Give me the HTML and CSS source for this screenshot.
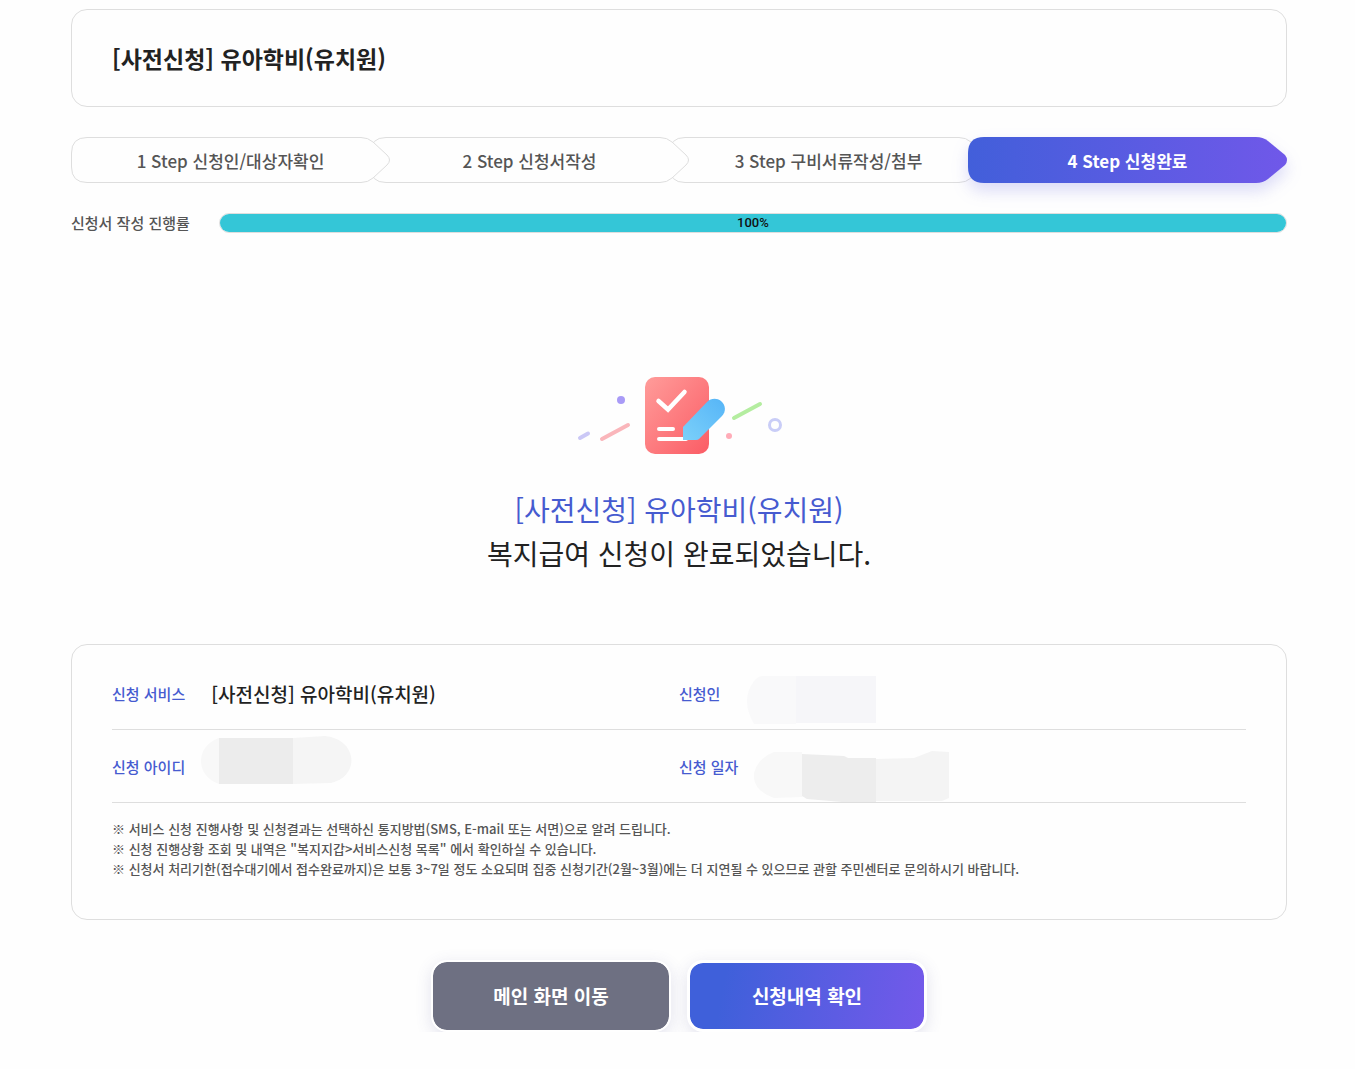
FILE: index.html
```html
<!DOCTYPE html>
<html lang="ko">
<head>
<meta charset="UTF-8">
<meta name="viewport" content="width=device-width, initial-scale=1.0">
<title>[사전신청] 유아학비(유치원)</title>
<link rel="stylesheet" href="styles.css">
</head>
<body>
    <main class="container">
        <header class="title-box">
            <h1>[사전신청] 유아학비(유치원)</h1>
        </header>

        <ol class="steps">
            <li class="step step1">
                <svg viewBox="0 0 319 46" preserveAspectRatio="none" aria-hidden="true"><path d="M16 .5H290Q297 .5 302 5L316 18Q321 23 316 28L302 41Q297 45.500 290 45.500H16Q.5 45.500 .5 30V16Q.5 .5 16 .5Z"/></svg>
                <span>1 Step 신청인/대상자확인</span>
            </li>
            <li class="step step2">
                <svg viewBox="0 0 319 46" preserveAspectRatio="none" aria-hidden="true"><path d="M16 .5H290Q297 .5 302 5L316 18Q321 23 316 28L302 41Q297 45.500 290 45.500H16Q.5 45.500 .5 30V16Q.5 .5 16 .5Z"/></svg>
                <span>2 Step 신청서작성</span>
            </li>
            <li class="step step3">
                <svg viewBox="0 0 319 46" preserveAspectRatio="none" aria-hidden="true"><path d="M16 .5H290Q297 .5 302 5L316 18Q321 23 316 28L302 41Q297 45.500 290 45.500H16Q.5 45.500 .5 30V16Q.5 .5 16 .5Z"/></svg>
                <span>3 Step 구비서류작성/첨부</span>
            </li>
            <li class="step active" aria-current="step">
                <svg viewBox="0 0 319 46" preserveAspectRatio="none" aria-hidden="true">
                    <defs>
                        <linearGradient id="stepFill" x1="0" y1="0" x2="1" y2="0">
                            <stop offset="0" stop-color="#425fda"/>
                            <stop offset="1" stop-color="#7058e9"/>
                        </linearGradient>
                    </defs>
                    <path d="M16 0H288Q295 0 300 4L317 18Q321 23 317 28L300 42Q295 46 288 46H16Q0 46 0 30V16Q0 0 16 0Z"/>
                </svg>
                <span>4 Step 신청완료</span>
            </li>
        </ol>

        <div class="progress">
            <span class="progress-label" id="progressLabel">신청서 작성 진행률</span>
            <div class="progress-track" role="progressbar" aria-labelledby="progressLabel" aria-valuenow="100" aria-valuemin="0" aria-valuemax="100">
                <div class="progress-bar" style="width:100%">100%</div>
            </div>
        </div>

        <section class="complete">
            <svg class="complete-icon" viewBox="-1 0 240 110" width="240" height="110" aria-hidden="true">
                <defs>
                    <linearGradient id="paper" x1="0" y1="0" x2="1" y2="1">
                        <stop offset="0" stop-color="#ff9c9a"/>
                        <stop offset="1" stop-color="#fb5c65"/>
                    </linearGradient>
                    <linearGradient id="pen" x1="1" y1="0" x2="0" y2="1">
                        <stop offset="0" stop-color="#56b5f7"/>
                        <stop offset="1" stop-color="#7bd0fa"/>
                    </linearGradient>
                </defs>
                <rect x="85" y="17" width="64" height="77" rx="10" fill="url(#paper)"/>
                <path d="M98.500 41L108 49.500L124.500 32" fill="none" stroke="#fff" stroke-width="4.500" stroke-linecap="round"/>
                <path d="M99 69H113M99 79H126" stroke="#fff" stroke-width="4" stroke-linecap="round"/>
                <path d="M123 80V67L147 42C151 38 157 38 161 41C166 45 166 52 162 56L139 79Q138 80 136 80Z" fill="url(#pen)"/>
                <g fill="none" stroke-width="4" stroke-linecap="round">
                    <path d="M20 78L28 73.500" stroke="#cbc8f6"/>
                    <path d="M42 79L68 65" stroke="#fab6bb"/>
                    <path d="M174 58L200 44" stroke="#b4eda0"/>
                    <circle cx="215" cy="65" r="5.500" stroke="#c9cdf7" stroke-width="3"/>
                </g>
                <circle cx="61" cy="40" r="4" fill="#a99bf7"/>
                <circle cx="169" cy="76" r="3" fill="#ffacb8"/>
            </svg>
            <h2><strong>[사전신청] 유아학비(유치원)</strong><br>복지급여 신청이 완료되었습니다.</h2>
        </section>

        <section class="info-box">
            <dl class="info">
                <div class="info-item">
                    <dt>신청 서비스</dt>
                    <dd>[사전신청] 유아학비(유치원)</dd>
                </div>
                <div class="info-item">
                    <dt>신청인</dt>
                    <dd>
                        <svg class="mask" width="132" height="72" aria-hidden="true">
                            <path d="M17 19H50V67H8Q-6 43 8 24Q12 19 17 19Z" fill="#f9f9fa"/>
                            <path d="M50 19H130V66H50Z" fill="#f6f6f9"/>
                        </svg>
                    </dd>
                </div>
                <div class="info-item narrow">
                    <dt>신청 아이디</dt>
                    <dd>
                        <svg class="mask" width="152" height="72" aria-hidden="true">
                            <path d="M18 8H92V54H18C-6 46 -6 16 18 8Z" fill="#f8f8f8"/>
                            <path d="M92 8L124 6C156 9 160 46 130 53L92 54Z" fill="#f5f5f5"/>
                            <path d="M18 8H92V54H18Z" fill="#ececec"/>
                        </svg>
                    </dd>
                </div>
                <div class="info-item narrow">
                    <dt>신청 일자</dt>
                    <dd>
                        <svg class="mask" width="196" height="72" aria-hidden="true">
                            <path d="M20 22H48V67L20 68Q-2 60 0 43Q4 28 20 22Z" fill="#f8f8f8"/>
                            <path d="M122 29L160 28L178 21L195 22V68L188 71H122Z" fill="#f4f4f4"/>
                            <path d="M48 24L90 26L94 28H122V72H88L53 69L48 66Z" fill="#ededed"/>
                        </svg>
                    </dd>
                </div>
            </dl>
            <ul class="notes">
                <li>※ 서비스 신청 진행사항 및 신청결과는 선택하신 통지방법(SMS, E-mail 또는 서면)으로 알려 드립니다.</li>
                <li>※ 신청 진행상황 조회 및 내역은 "복지지갑&gt;서비스신청 목록" 에서 확인하실 수 있습니다.</li>
                <li>※ 신청서 처리기한(접수대기에서 접수완료까지)은 보통 3~7일 정도 소요되며 집중 신청기간(2월~3월)에는 더 지연될 수 있으므로 관할 주민센터로 문의하시기 바랍니다.</li>
            </ul>
        </section>

        <div class="buttons">
            <button type="button" class="btn btn-gray">메인 화면 이동</button>
            <button type="button" class="btn btn-primary">신청내역 확인</button>
        </div>
    </main>
</body>
</html>
```

FILE: styles.css
```css
* {
    box-sizing: border-box;
}
body {
    margin: 0;
    background-color: #fefefe;
    color: #222;
    font-family: "Noto Sans CJK KR", "Noto Sans", sans-serif;
    font-weight: 500;
}
h1, h2, dl, dd, ol, ul {
    margin: 0;
    padding: 0;
}
ol, ul {
    list-style: none;
}
.container {
    padding: 9px 68px 36px 71px;
}

/* title */
.title-box {
    padding: 32px 40px;
    border: 1px solid #dedede;
    border-radius: 16px;
}
.title-box h1 {
    font-size: 23px;
    font-weight: 700;
    line-height: 32px;
}

/* steps */
.steps {
    display: flex;
    margin-top: 30px;
}
.step {
    display: grid;
    flex: 1 1 0;
    height: 46px;
    align-items: center;
    text-align: center;
    color: #555;
    font-size: 17px;
}
.step + .step {
    margin-left: -20px;
}
.step svg, .step span {
    grid-area: 1 / 1;
}
.step svg {
    width: 100%;
    height: 46px;
    overflow: visible;
}
.step path {
    fill: #fefefe;
    stroke: #dedede;
    vector-effect: non-scaling-stroke;
}
.step span {
    z-index: 1;
}
.step1 {
    z-index: 3;
}
.step2 {
    z-index: 2;
}
.step3 {
    z-index: 1;
}
.step.active {
    z-index: 4;
    color: #fff;
    font-weight: 700;
}
.step.active svg {
    filter: drop-shadow(0 8px 8px rgba(80, 80, 220, 0.2));
}
.step.active path {
    fill: url(#stepFill);
    stroke: none;
}

/* progress */
.progress {
    display: flex;
    align-items: center;
    gap: 29px;
    margin-top: 28px;
}
.progress-label {
    color: #555;
    font-size: 15px;
    line-height: 24px;
}
.progress-track {
    flex: 1;
    border: 1px solid #dedede;
    border-radius: 10px;
    overflow: hidden;
}
.progress-bar {
    height: 18px;
    background-color: #34c6d7;
    color: #111;
    font-family: Roboto, sans-serif;
    font-size: 13px;
    font-weight: 500;
    line-height: 18px;
    text-align: center;
}

/* complete message */
.complete {
    padding: 125px 0 69px;
    text-align: center;
}
.complete-icon {
    display: block;
    margin: 0 auto 17px;
}
.complete h2 {
    font-size: 28px;
    font-weight: 400;
    line-height: 44px;
}
.complete strong {
    color: #465bd0;
    font-weight: 400;
}

/* application info */
.info-box {
    padding: 12px 40px;
    border: 1px solid #dedede;
    border-radius: 16px;
}
.info {
    display: grid;
    grid-template-columns: 1fr 1fr;
}
.info-item {
    display: flex;
    align-items: center;
    gap: 26px;
    height: 73px;
    border-bottom: 1px solid #dedede;
}
.info-item.narrow {
    gap: 16px;
}
.info-item dt {
    color: #465bd0;
    font-size: 15px;
}
.info-item dd {
    font-size: 19px;
}
.mask {
    display: block;
}
.notes {
    padding: 16px 0 28px;
    color: #555;
    font-size: 13px;
    line-height: 20px;
}

/* buttons */
.buttons {
    display: flex;
    justify-content: center;
    gap: 16px;
    padding-top: 40px;
    overflow: hidden;
}
.btn {
    width: 240px;
    height: 72px;
    padding: 0 0 2px;
    border: 2px solid #fff;
    border-radius: 16px;
    background-clip: padding-box;
    box-shadow: 0 4px 16px rgba(80, 80, 150, 0.16);
    color: #fff;
    font-family: inherit;
    font-size: 19px;
    font-weight: 700;
    cursor: pointer;
}
.btn-gray {
    background-color: #6e7082;
}
.btn-primary {
    border-width: 3px;
    background-image: linear-gradient(100deg, #3f60da 15%, #7459ea);
}
```
